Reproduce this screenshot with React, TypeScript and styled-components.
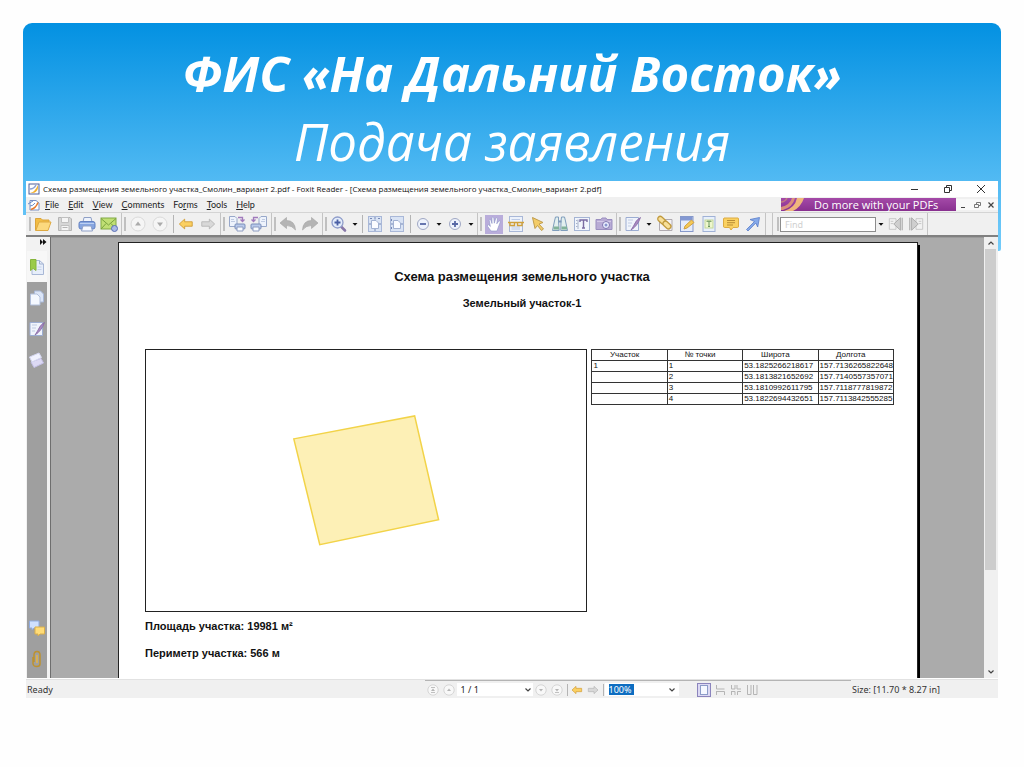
import React from "react";
import styled, { createGlobalStyle, css } from "styled-components";

const GlobalStyle = createGlobalStyle`
  *, *::before, *::after { box-sizing: border-box; }
  body { margin: 0; background: #fefefe; }
  button, input, select { font: inherit; color: inherit; margin: 0; padding: 0; border: 0; background: none; border-radius: 0; }
  svg { display: block; }
`;

const ui = `"Noto Sans", "Open Sans", sans-serif`;

const Slide = styled.main`
  min-height: 100vh;
  padding: 23px 23px 68px;
  font-family: ${ui};
`;

const Banner = styled.header`
  height: 228px;
  padding-top: 16px;
  border-radius: 9px 9px 2px 2px;
  background: linear-gradient(#0391e2, #52baf3 158px, #74ccfa);
  clip-path: polygon(0 0, 100% 0, 100% 100%, 50% 100%, 50% 192px, 0 192px);
`;

const Heading = styled.h1`
  margin: 0;
  color: #fff;
  font-family: "Open Sans", sans-serif;
  font-style: italic;
  font-weight: 400;
  font-size: 51px;
  line-height: 68px;
  text-align: center;
`;

const HeadingStrong = styled.strong`
  display: block;
  font-weight: 700;
  font-size: 49px;
`;

const Window = styled.section`
  position: relative;
  margin: -70px 3px 0;
  background: #f0f0f0;
  color: #222;
  font-size: 9px;
  line-height: 12px;
`;

const TitleBar = styled.div`
  display: flex;
  align-items: center;
  gap: 3px;
  height: 16px;
  padding: 0 2px;
  background: #fff;
`;

const TitleText = styled.span`
  flex: 1;
  color: #111;
  font-family: "Open Sans", sans-serif;
  font-size: 8px;
  white-space: nowrap;
`;

const CaptionButtons = styled.div`
  display: flex;
  gap: 2px;
`;

const CaptionButton = styled.button`
  width: 31px;
  height: 14px;
  display: grid;
  place-items: center;
`;

const MenuBar = styled.nav`
  display: flex;
  align-items: center;
  height: 15px;
  padding-left: 2px;
`;

const MenuList = styled.div`
  flex: 1;
  display: flex;
  gap: 9px;
  padding-left: 5px;
  font-family: Lato, "Open Sans", sans-serif;
`;

const MenuButton = styled.button`
  white-space: nowrap;
`;

const Promo = styled.a`
  display: flex;
  align-items: center;
  width: 175px;
  height: 13px;
  background: linear-gradient(#a44aa8, #88308f);
  color: #fff;
  font-family: "Open Sans", sans-serif;
  font-size: 11px;
  text-decoration: none;
  white-space: nowrap;
`;

const PromoText = styled.span`
  margin-left: 9px;
`;

const ChildButton = styled.button`
  width: 14px;
  height: 11px;
  display: grid;
  place-items: center;
  background: #f8f8f8;
`;

const ToolBar = styled.div`
  display: flex;
  height: 25px;
  padding-left: 1px;
  border-top: 1px solid #d4d4d4;
  border-bottom: 2px solid #808080;
`;

const Segment = styled.div<{ $apart?: boolean }>`
  display: flex;
  align-items: center;
  padding: 0 1px 0 2px;
  border-right: 1px solid #c4c4c4;
  ${(p) => p.$apart && css`margin-left: 6px; padding-left: 4px; border-left: 1px solid #c4c4c4;`}
`;

const Grip = styled.span`
  width: 2px;
  height: 14px;
  margin-right: 1px;
  background: #c0c0c0;
`;

const Rule = styled.span`
  width: 1px;
  height: 18px;
  margin: 0 1px 0 2px;
  background: #b4b4b4;
`;

const widths = { normal: "22px", snug: "20px", narrow: "10px" };

const ToolButton = styled.button<{ $active?: boolean; $width?: keyof typeof widths }>`
  display: grid;
  place-items: center;
  width: ${(p) => widths[p.$width ?? "normal"]};
  height: 19px;
  ${(p) => p.$active && css`background: linear-gradient(90deg, transparent 2px, #b9addb 2px, #b9addb 20px, transparent 20px);`}
`;

const FindBox = styled.input`
  width: 96px;
  height: 15px;
  padding-left: 4px;
  border: 1px solid #8c8c8c;
  background: #fff;
  &::placeholder { color: #d0d0d0; opacity: 1; }
`;

const Workspace = styled.div`
  display: flex;
  min-height: 442px;
  border-bottom: 1px solid #fff;
`;

const SidePanel = styled.aside`
  display: flex;
  flex-direction: column;
  width: 25px;
  padding-left: 1px;
  border-right: 1px solid #6e6e6e;
  background: #f2f2f2;
`;

const Expand = styled.button`
  align-self: flex-end;
  width: 11px;
  height: 14px;
  padding-top: 1px;
  display: grid;
  place-items: start;
`;

const TabStrip = styled.div`
  flex: 1;
  display: flex;
  flex-direction: column;
  width: 20px;
  padding-bottom: 4px;
  background: #9f9f9f;
`;

const SideTab = styled.button<{ $active?: boolean }>`
  display: grid;
  place-items: center;
  width: 20px;
  height: 31px;
  background: ${(p) => (p.$active ? "#f7f7f7" : "transparent")};
`;

const Spring = styled.span`
  flex: 1;
`;

const Canvas = styled.div`
  flex: 1;
  min-width: 0;
  display: flex;
  overflow: hidden;
  padding: 4px 66px 0 67px;
  background: #ababab;
  border-top: 1px solid #9a9a9a;
`;

const Sheet = styled.article`
  flex: 1;
  min-width: 0;
  padding: 26px 23px 5px 26px;
  border: solid #222;
  border-width: 1px 1px 0;
  box-shadow: 2px 3px #000;
  background: #fff;
  color: #111;
  font-family: "Liberation Sans", Arial, sans-serif;
  font-size: 11px;
  line-height: 14px;
`;

const SheetTitle = styled.h2`
  margin: 0;
  padding-left: 5px;
  font-size: 13px;
  line-height: 16px;
  text-align: center;
`;

const SheetSubtitle = styled.h3`
  margin: 11px 0 39px;
  padding-left: 5px;
  font-size: 11px;
  line-height: 14px;
  text-align: center;
`;

const PlanRow = styled.div`
  display: grid;
  grid-template-columns: minmax(0, 443fr) minmax(0, 303fr);
  align-items: start;
  gap: 4px;
`;

const MapFrame = styled.div`
  aspect-ratio: 443 / 263;
  border: 1px solid #222;
`;

const Coordinates = styled.table`
  width: 100%;
  border-collapse: collapse;
  table-layout: fixed;
  font-size: 8px;
  line-height: 10px;
  th, td { height: 11px; padding: 0 0 0 1px; border: 1px solid #333; font-weight: 400; text-align: left; white-space: nowrap; }
  th { padding-right: 11px; text-align: center; }
`;

const Measure = styled.p`
  margin: 7px 0 13px;
  font-weight: 700;
`;

const ScrollBar = styled.div`
  display: flex;
  flex-direction: column;
  width: 14px;
  padding-right: 1px;
  background: #f0f0f0;
`;

const ScrollButton = styled.button`
  display: grid;
  place-items: center;
  height: 12px;
`;

const ScrollTrack = styled.div`
  flex: 1;
`;

const ScrollThumb = styled.div`
  height: 77%;
  margin: 0 1px;
  background: #cdcdcd;
`;

const StatusBar = styled.footer`
  display: flex;
  height: 19px;
  border-top: 1px solid #e2e2e2;
  align-items: stretch;
`;

const StatusText = styled.span`
  flex: 0 0 41%;
  padding: 4px 2px 0 1px;
  color: #333;
`;

const PageControls = styled.div`
  flex: 1;
  display: flex;
  align-items: center;
  border-top: 1px solid #b4b4b4;
`;

const StatusButton = styled.button<{ $active?: boolean }>`
  display: grid;
  place-items: center;
  width: 16px;
  height: 16px;
  ${(p) => p.$active && css`width: 14px; height: 14px; margin: 0 1px 0 18px; background: #dcd9f3; border: 1px solid #8b84bd;`}
`;

const StatusRule = styled(Rule)`
  height: 12px;
`;

const Combo = styled.div<{ $wide?: boolean }>`
  display: flex;
  align-items: center;
  justify-content: space-between;
  width: ${(p) => (p.$wide ? "76px" : "74px")};
  height: 13px;
  padding: 0 1px 0 4px;
  background: #fff;
`;

const PageSelect = styled.select`
  flex: 1;
  appearance: none;
`;

const ZoomInput = styled.input`
  width: 25px;
  height: 11px;
  background: #0d6dc1;
  color: #fff;
`;

const ComboArrow = styled.button`
  width: 12px;
  height: 12px;
  display: grid;
  place-items: center;
`;

const SizeText = styled.span`
  flex: 0 0 147px;
  padding: 4px 0 0 1px;
  color: #333;
`;

const Icon = ({ children, size = 18, box = 18 }: { children: React.ReactNode; size?: number; box?: number }) => (
  <svg width={size} height={size} viewBox={`0 0 ${box} ${box}`} fill="none" aria-hidden="true">
    {children}
  </svg>
);

const Logo = () => (
  <Icon size={12} box={12}>
    <rect x="1" y="1" width="10" height="10" fill="#fff" stroke="#4f5f98" />
    <path d="M2 10Q7 9 10 2V5Q9 10 4 10Z" fill="#f2b02d" />
    <path d="M2 6Q6 6 8 2" stroke="#8ea2d3" strokeWidth="1.5" />
  </Icon>
);

const DocLogo = () => (
  <Icon size={12} box={12}>
    <path d="M2 1.5H8L11 4V11H2Z" fill="#fff" stroke="#7b8fc2" />
    <path d="M3 10.5Q8 9 10 3.5" stroke="#e8792c" strokeWidth="1.5" />
    <path d="M0 5L5 2M2 7Q5 7 7 4" stroke="#6b8cc9" />
  </Icon>
);

const Caret = () => (
  <Icon size={6} box={6}><path d="M.5 2H5.5L3 4.8Z" fill="#111" /></Icon>
);

const Chevron = ({ up }: { up?: boolean }) => (
  <Icon size={8} box={8}><path d={up ? "M1.5 5.5L4 3L6.5 5.5" : "M1.5 2.5L4 5L6.5 2.5"} stroke="#444" strokeWidth="1.2" /></Icon>
);

const OpenIcon = () => (
  <Icon>
    <path d="M1.5 15.5V3.5H7L8.5 5H15V8" fill="#f2bd45" stroke="#dba43a" />
    <path d="M1.8 15.5L5 7H17L14 15.5Z" fill="#fcd97e" stroke="#dfaa42" />
  </Icon>
);

const SaveIcon = () => (
  <Icon>
    <path d="M2.5 2.5H14L15.5 4V15.5H2.5Z" fill="#d6d6d6" stroke="#b4b4b4" />
    <path d="M5.5 2.5H12.5V7.5H5.5ZM5 10.5H13V15.5H5Z" fill="#f5f5f5" stroke="#c0c0c0" />
    <path d="M6.5 12.5H11.5" stroke="#b4b4b4" />
  </Icon>
);

const PrintIcon = () => (
  <Icon>
    <path d="M5 7L6 2.5H13L14 7" fill="#eef3fc" stroke="#8fa0c6" />
    <rect x="1" y="6.5" width="16" height="7.5" rx="2" fill="#86a5e0" stroke="#6482c2" />
    <path d="M2 8.5H16" stroke="#bcd0f2" />
    <path d="M5 11H13L14.5 16H3.5Z" fill="#f5f8ff" stroke="#8fa0c6" />
  </Icon>
);

const MailIcon = () => (
  <Icon>
    <rect x="1" y="3" width="15" height="11" fill="#c0df74" stroke="#80a945" />
    <path d="M1 3.5L8.5 10L16 3.5M1 14L6 8.5M16 14L11 8.5" stroke="#78a23e" />
    <circle cx="14.5" cy="13.5" r="3" fill="#a9b8e6" stroke="#5b70b4" />
  </Icon>
);

const RoundArrow = ({ down }: { down?: boolean }) => (
  <Icon>
    <circle cx="9" cy="9" r="7" fill="#f5f5f5" stroke="#dadada" />
    <path d={down ? "M6 7.5H12L9 11.5Z" : "M6 10.5H12L9 6.5Z"} fill="#ababab" />
  </Icon>
);

const BlockArrow = ({ gray, size }: { gray?: boolean; size?: number }) => (
  <Icon size={size}>
    <path
      d={gray ? "M16.5 9L10.5 3.5V6.5H2V11.5H10.5V14.5Z" : "M1.5 9L7.5 3.5V6.5H16V11.5H7.5V14.5Z"}
      fill={gray ? "#d8d8d8" : "#fbd062"}
      stroke={gray ? "#b4b4b4" : "#d09c36"}
      strokeLinejoin="round"
    />
  </Icon>
);

const PagesIcon = ({ back }: { back?: boolean }) => (
  <Icon>
    <g transform={back ? "translate(18 0) scale(-1 1)" : undefined}>
      <path d="M1.5 1.5H7L9 3.5V11.5H1.5Z" fill="#eef3fc" stroke="#98a8ca" />
      <path d="M3 4.5H6M3 6.5H7" stroke="#c0cbe2" />
      <path d="M10 2.5H14.5V6M12.5 4.5L14.5 6.5L16.5 4.5" stroke="#a07abc" strokeWidth="1.3" />
      <rect x="7" y="9" width="10" height="5" rx="1" fill="#b9caeb" stroke="#7b8eb9" />
      <path d="M9 12H15V16H9Z" fill="#f8fbff" stroke="#8c9bc0" />
    </g>
  </Icon>
);

const Curved = ({ redo }: { redo?: boolean }) => (
  <Icon>
    <path
      transform={redo ? "translate(18 0) scale(-1 1)" : undefined}
      d="M1 8L7.5 2.5V5.5Q16 5.5 16.5 15Q13 10.5 7.5 10.5V13.5Z"
      fill="#b4b4b4"
      stroke="#a2a2a2"
      strokeWidth=".6"
    />
  </Icon>
);

const MagnifierIcon = () => (
  <Icon>
    <path d="M10.5 11L15 15.5" stroke="#8878a8" strokeWidth="2.6" strokeLinecap="round" />
    <circle cx="7.5" cy="7.5" r="5.5" fill="#e4edfb" stroke="#8f9dca" strokeWidth="1.3" />
    <path d="M4.5 7.5H10.5M7.5 4.5V10.5" stroke="#4a5fa4" strokeWidth="1.8" />
  </Icon>
);

const FitIcon = ({ wide }: { wide?: boolean }) => (
  <Icon>
    <rect x="2.5" y="1.5" width="13" height="15" fill="#d9e3f4" stroke="#a9b8d8" />
    <path d="M5.5 5.5H10L12.5 8V13.5H5.5Z" fill="#fbfcff" stroke="#a3b2d2" />
    <path d={wide ? "M3 9H5M13 9H15M3.5 4V6M3.5 12V14" : "M9 2V4.5M9 14V16M3 9H5M13 9H15M4 3.5H6M12 3.5H14"} stroke="#7789b6" />
  </Icon>
);

const ZoomStep = ({ plus }: { plus?: boolean }) => (
  <Icon>
    <circle cx="9" cy="9" r="5.5" fill="#edf2fc" stroke="#a0a8c4" />
    <path d={plus ? "M6 9H12M9 6V12" : "M6 9H12"} stroke="#5768a6" strokeWidth="1.8" />
  </Icon>
);

const HandIcon = () => (
  <Icon>
    <path
      d="M6 16L2.5 11.2Q2 9.6 3.6 9.8L5.4 11.5L4.2 5.2Q4.3 3.8 5.6 4.5L7 8.5L7 2.8Q7.8 1.3 8.8 2.8L9.3 8.2L10.8 3.2Q12 2.2 12.5 3.6L11.8 8.8L14 5.8Q15.6 5.4 15.3 7L13.2 12.5L12 16Z"
      fill="#fff" stroke="#8c94c8" strokeWidth=".6"
    />
  </Icon>
);

const ReadIcon = () => (
  <Icon>
    <rect x="2.5" y="1.5" width="13" height="15" fill="#edf2fb" stroke="#a9b8d8" />
    <path d="M4.5 4.5H13M4.5 12H13M4.5 14H13" stroke="#bccae6" />
    <path d="M1 7.5H17M3 8V10.5H7.5V8M10.5 8V10.5H15V8" stroke="#d0a03a" strokeWidth="1.4" />
  </Icon>
);

const PointerIcon = () => (
  <Icon><path d="M3.5 2.5L14 7.5L10 9L14.5 14L12.5 15.5L8.5 10.5L6 13.5Z" fill="#f3cc68" stroke="#c09c4c" strokeLinejoin="round" /></Icon>
);

const BinocularsIcon = () => (
  <Icon>
    <path d="M4.5 2H7.5V6L8.2 15.5H1.5L3.5 6ZM10.5 2H13.5L14.5 6L16.5 15.5H9.8L10 6Z" fill="#e2efef" stroke="#7f9dbc" />
    <path d="M7.5 6.5H10.5" stroke="#7d98b8" strokeWidth="2" />
    <path d="M2.5 13H8M10.5 13H16" stroke="#82b29a" strokeWidth="3" />
  </Icon>
);

const TextSelectIcon = () => (
  <Icon>
    <rect x="1.5" y="2.5" width="15" height="13" fill="#f1f5fc" stroke="#a4b4d4" />
    <path d="M5 4.5V14M3 5.5H4.5M3 8.5H4.5M3 11.5H4.5" stroke="#a8b3ca" />
    <path d="M7 7V5H14V7M10.5 5V13M9 13H12" stroke="#7a6ba2" strokeWidth="1.4" />
  </Icon>
);

const CameraIcon = () => (
  <Icon>
    <path d="M1 4.5H6L7 3H11L12 4.5H17V14.5H1Z" fill="#b8abd5" stroke="#9b8fc0" />
    <path d="M2 6.5H16" stroke="#d4cae8" />
    <circle cx="11" cy="10" r="3.5" fill="#edf0ff" stroke="#7f76b0" />
    <circle cx="11" cy="10" r="1.5" fill="#8995cf" />
  </Icon>
);

const SignIcon = () => (
  <Icon>
    <path d="M2 2.5H14.5V15.5H2Z" fill="#f0f4fc" stroke="#9cadd2" />
    <path d="M4 5H9M4 8H8M4 11H7" stroke="#c0cce2" />
    <path d="M16.5 2.5Q12 4.5 9.5 11L7 15Q13.5 11 16.5 2.5Z" fill="#a98bc2" stroke="#8568a4" strokeWidth=".8" />
  </Icon>
);

const LinkIcon = () => (
  <Icon>
    <path d="M3.5 4.5H16V15.5H3.5Z" fill="#f4f2f5" stroke="#b0abb0" />
    <g transform="rotate(42 8 8)" stroke="#c09a3e" strokeWidth="1.3">
      <rect x="0" y="5" width="9" height="5" rx="2.5" fill="#f8df98" />
      <rect x="7" y="5" width="9" height="5" rx="2.5" fill="#f8df98" />
    </g>
  </Icon>
);

const NoteIcon = () => (
  <Icon>
    <rect x="2.5" y="1.5" width="12.5" height="15" fill="#e6ecfa" stroke="#8598ca" />
    <path d="M3 2H14.5V5.5H3Z" fill="#8398d2" />
    <path d="M6 14L7 11L13.5 5L16 7.5L9 13Z" fill="#f6c955" stroke="#cfa043" />
  </Icon>
);

const TextBoxIcon = () => (
  <Icon>
    <rect x="3" y="1.5" width="12" height="15" fill="#e8f0fb" stroke="#a0b2d6" />
    <rect x="5" y="5" width="8" height="8" fill="#eef7cc" stroke="#c3d69a" />
    <path d="M7 7V6.2H11V7M9 6V11.5M8 11.5H10" stroke="#6c9660" />
  </Icon>
);

const CommentIcon = () => (
  <Icon>
    <path d="M2 3H16Q16.5 3 16.5 4V11Q16.5 12.5 15.5 12.5H11L9 15L7.5 12.5H2.5Q1.5 12.5 1.5 11V4Z" fill="#fad161" stroke="#dcab42" />
    <path d="M5 5.5H13M5 7.7H13M5 10H11" stroke="#b98d35" />
  </Icon>
);

const ArrowIcon = () => (
  <Icon><path d="M2.5 14.5L10.5 6.5L6 4.5L15.5 2.5L13.7 12L11.8 8L4 16Z" fill="#86aaea" stroke="#5b7cc8" strokeWidth=".8" /></Icon>
);

const FindStep = ({ next }: { next?: boolean }) => (
  <Icon size={16}>
    <g transform={next ? "translate(18 0) scale(-1 1)" : undefined}>
      <path d="M1.5 3H9V15H1.5ZM3 6H6M3 8.5H6" fill="#f2f2f2" stroke="#c4c4c4" />
      <path d="M14 2V16L6.5 9Z" fill="#cfcfcf" stroke="#a8a8a8" />
      <path d="M16 2V16" stroke="#b4b4b4" strokeWidth="1.5" />
    </g>
  </Icon>
);

const BookmarkIcon = () => (
  <Icon>
    <path d="M5 2.5H11.5L15.5 6V16.5H4V12" fill="#e7eefa" stroke="#a9b8d6" />
    <path d="M11.5 2.5V6H15.5" stroke="#a0b0cf" />
    <path d="M2.5 1.5H8V12.5L5.2 10.5L2.5 12.5Z" fill="#9acb49" stroke="#86b53c" />
    <path d="M9.5 9H13.5M9.5 11.5H13.5" stroke="#c6d2e8" />
  </Icon>
);

const StackIcon = () => (
  <Icon>
    <path d="M6.5 2H12.5L15.5 5V13H6.5Z" fill="#dbe5f7" stroke="#a9b9d9" />
    <path d="M2.5 5H9L12 8V16H2.5Z" fill="#f4f8ff" stroke="#b2c0dc" />
  </Icon>
);

const LayersIcon = () => (
  <Icon>
    <path d="M3 11L13 7.5L15.5 12L6 16.5Z" fill="#dcd9f4" stroke="#c3bfe6" />
    <path d="M1.5 6L11 2L13.5 6.5L4 11Z" fill="#f1f2ff" stroke="#d4d6f0" />
  </Icon>
);

const CommentsTabIcon = () => (
  <Icon>
    <path d="M1.5 2H11V9H6L4 11V9H1.5Z" fill="#cfe0ff" stroke="#8fabe0" />
    <path d="M7 8H16.5V15H12L10 17V15H7Z" fill="#ffdc78" stroke="#d9ae4a" />
  </Icon>
);

const ClipIcon = () => (
  <Icon>
    <path d="M6 12V5Q6 1.5 9 1.5T12 5V14Q12 16.5 8.7 16.5T5 14V7" stroke="#bd922f" strokeWidth="1.5" />
    <path d="M9 5V13" stroke="#dcb250" strokeWidth="1.8" />
  </Icon>
);

const PageStep = ({ down, edge }: { down?: boolean; edge?: boolean }) => (
  <Icon size={14} box={14}>
    <circle cx="7" cy="7" r="5.2" fill="#f8f8f8" stroke="#d6d6d6" />
    <path d={down ? "M5 6H9L7 8.5Z" : "M5 8H9L7 5.5Z"} fill="#b4b4b4" />
    {edge && <path d={down ? "M5 9.5H9" : "M5 4.5H9M5 9.5H9"} stroke="#c0c0c0" />}
  </Icon>
);

const layoutPaths = ["M3.5 2V6H11.5M3.5 8V12M3.5 8.5H11.5V12", "M2.5 2V6H6V2M8 2V6H12M2.5 8V12M2.5 8.5H6V12M8.5 12V8.5H12", "M2.5 2V11.5H6V2M8.5 2V11.5H12V2"];

const menus: [string, string, string][] = [
  ["", "F", "ile"], ["", "E", "dit"], ["", "V", "iew"], ["", "C", "omments"], ["Fo", "r", "ms"], ["", "T", "ools"], ["", "H", "elp"],
];

const points = [
  ["1", "1", "53.1825266218617", "157.7136265822648"],
  ["", "2", "53.1813821652692", "157.7140557357071"],
  ["", "3", "53.1810992611795", "157.7118777819872"],
  ["", "4", "53.1822694432651", "157.7113842555285"],
];

const Tool = ({ label, active, width, children }: { label: string; active?: boolean; width?: keyof typeof widths; children: React.ReactNode }) => (
  <ToolButton type="button" aria-label={label} $active={active} $width={width}>{children}</ToolButton>
);

const DropDown = ({ label }: { label: string }) => (
  <Tool label={label} width="narrow"><Caret /></Tool>
);

export default function App() {
  return (
    <Slide>
      <GlobalStyle />
      <Banner>
        <Heading>
          <HeadingStrong>ФИС «На Дальний Восток»</HeadingStrong>
          Подача заявления
        </Heading>
      </Banner>

      <Window>
        <TitleBar>
          <Logo />
          <TitleText>Схема размещения земельного участка_Смолин_вариант 2.pdf - Foxit Reader - [Схема размещения земельного участка_Смолин_вариант 2.pdf]</TitleText>
          <CaptionButtons>
            <CaptionButton type="button" aria-label="Minimize"><Icon size={10} box={10}><path d="M1 5.5H8" stroke="#333" /></Icon></CaptionButton>
            <CaptionButton type="button" aria-label="Restore"><Icon size={10} box={10}><path d="M1.5 3.5H6.5V8.5H1.5ZM3.5 3.5V1.5H8.5V6.5H6.5" stroke="#333" /></Icon></CaptionButton>
            <CaptionButton type="button" aria-label="Close"><Icon size={10} box={10}><path d="M1 1L9 9M9 1L1 9" stroke="#333" /></Icon></CaptionButton>
          </CaptionButtons>
        </TitleBar>

        <MenuBar>
          <DocLogo />
          <MenuList>
            {menus.map(([before, key, after]) => (
              <MenuButton key={before + key + after} type="button">{before}<u>{key}</u>{after}</MenuButton>
            ))}
          </MenuList>
          <Promo href="#">
            <svg width="24" height="13" viewBox="0 0 24 13" fill="none" aria-hidden="true">
              <path d="M3 13Q14 10 16 0H23Q20 9 12 13Z" fill="#f0b77c" />
              <path d="M0 9Q9 7 11 0H14Q12 9 2 12H0Z" fill="#d98f7c" />
              <path d="M0 4Q4 4 6 0" stroke="#c07a80" strokeWidth="1.5" />
            </svg>
            <PromoText>Do more with your PDFs</PromoText>
          </Promo>
          <ChildButton type="button" aria-label="Minimize document"><Icon size={8} box={8}><path d="M2 6.5H6" stroke="#444" /></Icon></ChildButton>
          <ChildButton type="button" aria-label="Restore document"><Icon size={8} box={8}><path d="M1.5 3.5H5.5V6.5H1.5ZM3.5 3V1.5H7.5V4.5H6" stroke="#777" /></Icon></ChildButton>
          <ChildButton type="button" aria-label="Close document"><Icon size={8} box={8}><path d="M1.5 1.5L6.5 6.5M6.5 1.5L1.5 6.5" stroke="#444" strokeWidth="1.2" /></Icon></ChildButton>
        </MenuBar>

        <ToolBar role="toolbar">
          <Segment>
            <Grip />
            <Tool label="Open"><OpenIcon /></Tool>
            <Tool label="Save"><SaveIcon /></Tool>
            <Tool label="Print"><PrintIcon /></Tool>
            <Tool label="Email"><MailIcon /></Tool>
          </Segment>
          <Segment>
            <Grip />
            <Tool label="Previous page"><RoundArrow /></Tool>
            <Tool label="Next page"><RoundArrow down /></Tool>
            <Rule />
            <Tool label="Previous view"><BlockArrow size={16} /></Tool>
            <Tool label="Next view"><BlockArrow gray size={16} /></Tool>
          </Segment>
          <Segment>
            <Grip />
            <Tool label="Import pages"><PagesIcon /></Tool>
            <Tool label="Export pages"><PagesIcon back /></Tool>
          </Segment>
          <Segment>
            <Grip />
            <Tool label="Undo"><Curved /></Tool>
            <Tool label="Redo"><Curved redo /></Tool>
          </Segment>
          <Segment>
            <Grip />
            <Tool label="Zoom tool"><MagnifierIcon /></Tool>
            <DropDown label="Zoom tools" />
            <Rule />
            <Tool label="Fit page"><FitIcon /></Tool>
            <Tool label="Fit width"><FitIcon wide /></Tool>
            <Rule />
            <Tool label="Zoom out"><ZoomStep /></Tool>
            <DropDown label="Zoom out levels" />
            <Tool label="Zoom in"><ZoomStep plus /></Tool>
            <DropDown label="Zoom in levels" />
          </Segment>
          <Segment>
            <Grip />
            <Tool label="Hand" active><HandIcon /></Tool>
            <Tool label="Reading mode"><ReadIcon /></Tool>
            <Tool label="Select annotation"><PointerIcon /></Tool>
            <Tool label="Search"><BinocularsIcon /></Tool>
            <Tool label="Select text"><TextSelectIcon /></Tool>
            <Tool label="Snapshot"><CameraIcon /></Tool>
          </Segment>
          <Segment>
            <Grip />
            <Tool label="Sign"><SignIcon /></Tool>
            <DropDown label="Signatures" />
            <Tool label="Link"><LinkIcon /></Tool>
            <Tool label="Highlight"><NoteIcon /></Tool>
            <Tool label="Text box"><TextBoxIcon /></Tool>
            <Tool label="Comment"><CommentIcon /></Tool>
            <Tool label="Arrow"><ArrowIcon /></Tool>
          </Segment>
          <Segment $apart>
            <Grip />
            <FindBox type="text" placeholder="Find" aria-label="Find" />
            <DropDown label="Find options" />
            <Tool label="Find previous" width="snug"><FindStep /></Tool>
            <Tool label="Find next" width="snug"><FindStep next /></Tool>
          </Segment>
        </ToolBar>

        <Workspace>
          <SidePanel>
            <Expand type="button" aria-label="Expand panel">
              <Icon size={8} box={8}><path d="M1 1L4 4L1 7ZM4 1L7.5 4L4 7Z" fill="#111" /></Icon>
            </Expand>
            <TabStrip>
              <SideTab type="button" aria-label="Bookmarks" $active><BookmarkIcon /></SideTab>
              <SideTab type="button" aria-label="Pages"><StackIcon /></SideTab>
              <SideTab type="button" aria-label="Signatures"><SignIcon /></SideTab>
              <SideTab type="button" aria-label="Layers"><LayersIcon /></SideTab>
              <Spring />
              <SideTab type="button" aria-label="Comments"><CommentsTabIcon /></SideTab>
              <SideTab type="button" aria-label="Attachments"><ClipIcon /></SideTab>
            </TabStrip>
          </SidePanel>

          <Canvas>
            <Sheet>
              <SheetTitle>Схема размещения земельного участка</SheetTitle>
              <SheetSubtitle>Земельный участок-1</SheetSubtitle>
              <PlanRow>
                <MapFrame>
                  <svg width="100%" height="100%" viewBox="146 350 441 261" role="img" aria-label="План участка">
                    <path d="M294 439L415 416L439 520L320 545Z" fill="#fdf0b6" stroke="#f2d348" strokeWidth="1.5" />
                  </svg>
                </MapFrame>
                <Coordinates>
                  <thead>
                    <tr><th scope="col">Участок</th><th scope="col">№ точки</th><th scope="col">Широта</th><th scope="col">Долгота</th></tr>
                  </thead>
                  <tbody>
                    {points.map((row) => (
                      <tr key={row[1]}>{row.map((cell, i) => <td key={i}>{cell}</td>)}</tr>
                    ))}
                  </tbody>
                </Coordinates>
              </PlanRow>
              <Measure>Площадь участка: 19981 м²</Measure>
              <Measure>Периметр участка: 566 м</Measure>
            </Sheet>
          </Canvas>

          <ScrollBar>
            <ScrollButton type="button" aria-label="Scroll up"><Chevron up /></ScrollButton>
            <ScrollTrack><ScrollThumb /></ScrollTrack>
            <ScrollButton type="button" aria-label="Scroll down"><Chevron /></ScrollButton>
          </ScrollBar>
        </Workspace>

        <StatusBar>
          <StatusText>Ready</StatusText>
          <PageControls>
            <StatusButton type="button" aria-label="First page"><PageStep edge /></StatusButton>
            <StatusButton type="button" aria-label="Page up"><PageStep /></StatusButton>
            <Combo $wide>
              <PageSelect aria-label="Page" defaultValue="1"><option value="1">1 / 1</option></PageSelect>
              <Chevron />
            </Combo>
            <StatusButton type="button" aria-label="Page down"><PageStep down /></StatusButton>
            <StatusButton type="button" aria-label="Last page"><PageStep down edge /></StatusButton>
            <StatusRule />
            <StatusButton type="button" aria-label="Back"><BlockArrow size={12} /></StatusButton>
            <StatusButton type="button" aria-label="Forward"><BlockArrow gray size={12} /></StatusButton>
            <StatusRule />
            <Combo>
              <ZoomInput type="text" aria-label="Zoom" defaultValue="100%" />
              <ComboArrow type="button" aria-label="Zoom levels"><Chevron /></ComboArrow>
            </Combo>
            <StatusButton type="button" aria-label="Single page" $active>
              <Icon size={12} box={12}><rect x="2.5" y="1.5" width="7" height="9" fill="#f5f8ff" stroke="#8c9cc8" /></Icon>
            </StatusButton>
            {layoutPaths.map((d, i) => (
              <StatusButton key={d} type="button" aria-label={["Continuous", "Facing", "Continuous facing"][i]}>
                <Icon size={14} box={14}><path d={d} stroke="#b5b5b5" /></Icon>
              </StatusButton>
            ))}
          </PageControls>
          <SizeText>Size: [11.70 * 8.27 in]</SizeText>
        </StatusBar>
      </Window>
    </Slide>
  );
}
